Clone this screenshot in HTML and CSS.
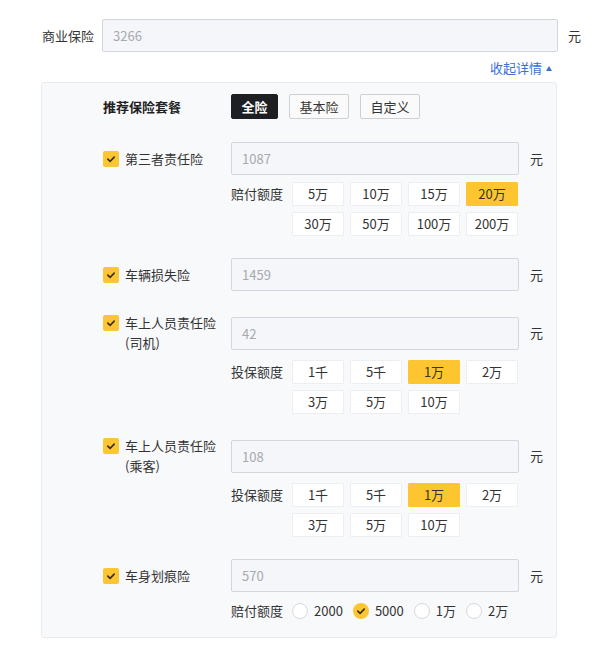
FILE: index.html
```html
<!DOCTYPE html>
<html lang="zh-CN">
<head>
<meta charset="utf-8">
<title>商业保险</title>
<link rel="stylesheet" href="styles.css">
</head>
<body>
<div class="page">
  <div class="top-row">
    <span class="top-label">商业保险</span>
    <div class="input top-input">3266</div>
    <span class="unit">元</span>
  </div>
  <div class="toggle-row">
    <a class="toggle">收起详情<span class="tri"></span></a>
  </div>
  <div class="panel">
    <div class="pkg-row">
      <div class="pkg-title">推荐保险套餐</div>
      <div class="pkg-btns">
        <span class="pkg-btn active">全险</span>
        <span class="pkg-btn">基本险</span>
        <span class="pkg-btn">自定义</span>
      </div>
    </div>

    <div class="item">
      <div class="item-label"><span class="cb"><svg viewBox="0 0 16 16" width="16" height="16"><rect width="16" height="16" rx="2" fill="#fcc633"/><path d="M4.8 8.1l2.3 2.3 4.1-4.3" fill="none" stroke="#3a2f1a" stroke-width="1.6" stroke-linecap="round" stroke-linejoin="round"/></svg></span><span class="lbl-text">第三者责任险</span></div>
      <div class="input">1087</div>
      <span class="unit">元</span>
      <div class="opts">
        <span class="opt-label">赔付额度</span>
        <div class="opt-grid">
          <span class="opt">5万</span><span class="opt">10万</span><span class="opt">15万</span><span class="opt sel">20万</span>
          <span class="opt">30万</span><span class="opt">50万</span><span class="opt">100万</span><span class="opt">200万</span>
        </div>
      </div>
    </div>

    <div class="item">
      <div class="item-label"><span class="cb"><svg viewBox="0 0 16 16" width="16" height="16"><rect width="16" height="16" rx="2" fill="#fcc633"/><path d="M4.8 8.1l2.3 2.3 4.1-4.3" fill="none" stroke="#3a2f1a" stroke-width="1.6" stroke-linecap="round" stroke-linejoin="round"/></svg></span><span class="lbl-text">车辆损失险</span></div>
      <div class="input">1459</div>
      <span class="unit">元</span>
    </div>

    <div class="item">
      <div class="item-label"><span class="cb"><svg viewBox="0 0 16 16" width="16" height="16"><rect width="16" height="16" rx="2" fill="#fcc633"/><path d="M4.8 8.1l2.3 2.3 4.1-4.3" fill="none" stroke="#3a2f1a" stroke-width="1.6" stroke-linecap="round" stroke-linejoin="round"/></svg></span><span class="lbl-text">车上人员责任险<br>(司机)</span></div>
      <div class="input">42</div>
      <span class="unit">元</span>
      <div class="opts">
        <span class="opt-label">投保额度</span>
        <div class="opt-grid">
          <span class="opt">1千</span><span class="opt">5千</span><span class="opt sel">1万</span><span class="opt">2万</span>
          <span class="opt">3万</span><span class="opt">5万</span><span class="opt">10万</span>
        </div>
      </div>
    </div>

    <div class="item">
      <div class="item-label"><span class="cb"><svg viewBox="0 0 16 16" width="16" height="16"><rect width="16" height="16" rx="2" fill="#fcc633"/><path d="M4.8 8.1l2.3 2.3 4.1-4.3" fill="none" stroke="#3a2f1a" stroke-width="1.6" stroke-linecap="round" stroke-linejoin="round"/></svg></span><span class="lbl-text">车上人员责任险<br>(乘客)</span></div>
      <div class="input">108</div>
      <span class="unit">元</span>
      <div class="opts">
        <span class="opt-label">投保额度</span>
        <div class="opt-grid">
          <span class="opt">1千</span><span class="opt">5千</span><span class="opt sel">1万</span><span class="opt">2万</span>
          <span class="opt">3万</span><span class="opt">5万</span><span class="opt">10万</span>
        </div>
      </div>
    </div>

    <div class="item">
      <div class="item-label"><span class="cb"><svg viewBox="0 0 16 16" width="16" height="16"><rect width="16" height="16" rx="2" fill="#fcc633"/><path d="M4.8 8.1l2.3 2.3 4.1-4.3" fill="none" stroke="#3a2f1a" stroke-width="1.6" stroke-linecap="round" stroke-linejoin="round"/></svg></span><span class="lbl-text">车身划痕险</span></div>
      <div class="input">570</div>
      <span class="unit">元</span>
      <div class="opts radios">
        <span class="opt-label">赔付额度</span>
        <label class="radio"><span class="rc"></span>2000</label>
        <label class="radio"><span class="rc on"><svg viewBox="0 0 16 16" width="16" height="16"><circle cx="8" cy="8" r="8" fill="#fcc633"/><path d="M4.8 8.1l2.3 2.3 4.1-4.3" fill="none" stroke="#3a2f1a" stroke-width="1.6" stroke-linecap="round" stroke-linejoin="round"/></svg></span>5000</label>
        <label class="radio"><span class="rc"></span>1万</label>
        <label class="radio"><span class="rc"></span>2万</label>
      </div>
    </div>
  </div>
</div>
</body>
</html>
```

FILE: styles.css
```css
* { box-sizing: border-box; }
html, body { margin: 0; padding: 0; background: #fff; }
body {
  font-family: "Noto Sans CJK SC", "Noto Sans", sans-serif;
  font-size: 13px;
  color: #333;
  line-height: 20px;
}
.page { width: 608px; padding-top: 19px; }

.top-row {
  display: flex;
  align-items: center;
  padding-left: 42px;
}
.top-label { width: 52px; margin-right: 8px; white-space: nowrap; }
.input {
  height: 33px;
  border: 1px solid #d3d6dc;
  border-radius: 2px;
  background: #f5f6f9;
  color: #a6a9b0;
  padding: 0 10px;
  line-height: 31px;
  font-size: 13px;
}
.top-input { width: 456px; }
.unit { margin-left: 10px; }

.toggle-row {
  display: flex;
  justify-content: flex-end;
  width: 557px;
  margin-top: 8px;
  margin-bottom: 6px;
  padding-right: 5px;
}
.toggle {
  color: #3b6fd7;
  line-height: 16px;
  display: flex;
  align-items: center;
}
.tri {
  width: 0; height: 0;
  margin-left: 4px;
  border-left: 3.5px solid transparent;
  border-right: 3.5px solid transparent;
  border-bottom: 5px solid #3b6fd7;
}

.panel {
  margin-left: 41px;
  width: 516px;
  background: #f8f9fb;
  border: 1px solid #e9ebef;
  border-radius: 3px;
  padding: 11px 0 14px 61px;
}

.pkg-row { display: flex; align-items: center; height: 25px; }
.pkg-title { width: 128px; font-weight: bold; color: #222; }
.pkg-btns { display: flex; gap: 11px; }
.pkg-btn {
  height: 25px;
  line-height: 23px;
  padding: 0 9.5px;
  border: 1px solid #cdd0d5;
  border-radius: 2px;
  background: #fafafa;
  color: #333;
}
.pkg-btn.active {
  background: #1e1f23;
  border-color: #1e1f23;
  color: #fff;
  font-weight: bold;
}

.item {
  display: grid;
  grid-template-columns: 128px 288px auto;
  row-gap: 7px;
  align-items: center;
  margin-top: 22px;
}
.pkg-row + .item { margin-top: 23px; }
.item .unit { margin-left: 11px; }
.item-label { display: flex; align-items: flex-start; }
.cb { width: 16px; height: 16px; margin-top: 2px; margin-right: 6px; flex: none; display: block; }
.cb svg { display: block; }
.lbl-text { line-height: 20px; }

.opts {
  grid-column: 2 / 4;
  display: flex;
  align-items: flex-start;
}
.opt-label { width: 52px; margin-right: 9px; line-height: 24px; white-space: nowrap; }
.opt-grid {
  display: grid;
  grid-template-columns: repeat(4, 52px);
  grid-auto-rows: 24px;
  gap: 6px;
}
.opt {
  background: #fff;
  border: 1px solid #eceef1;
  border-radius: 1px;
  text-align: center;
  line-height: 22px;
  color: #333;
}
.opt.sel { background: #fdc631; border-color: #fdc631; }

.radios { align-items: center; height: 24px; }
.radio { display: flex; align-items: center; margin-right: 10px; }
.rc {
  width: 16px; height: 16px;
  border-radius: 50%;
  border: 1px solid #d6d9de;
  background: #fff;
  margin-right: 6px;
  display: block;
}
.rc.on { border: none; }
.rc svg { display: block; }
```
